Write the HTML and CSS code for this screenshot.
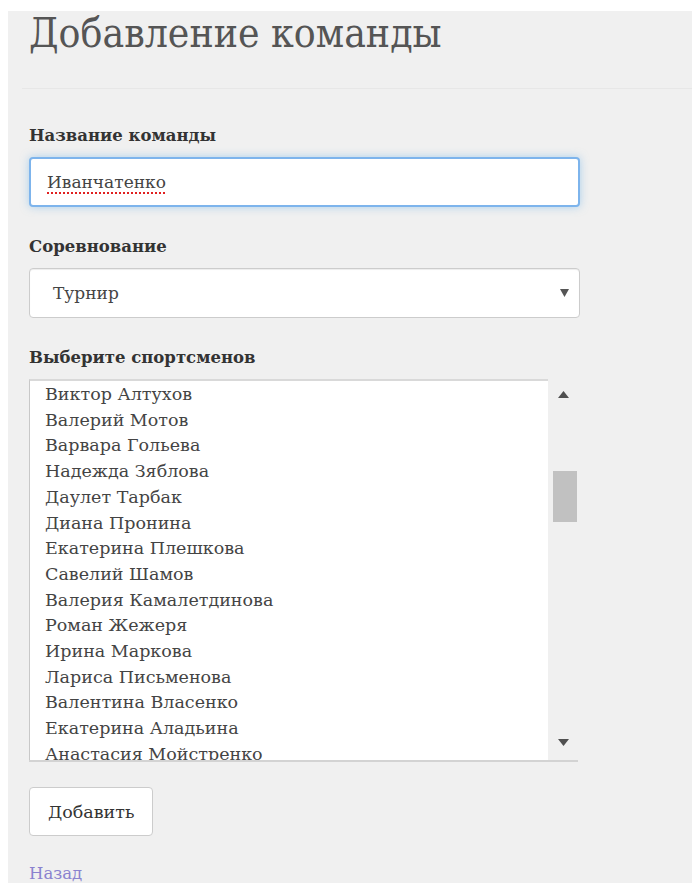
FILE: index.html
```html
<!DOCTYPE html>
<html lang="ru">
<head>
<meta charset="utf-8">
<title>Добавление команды</title>
<link rel="stylesheet" href="styles.css">
</head>
<body>
<div class="page">
  <h1 class="title">Добавление команды</h1>
  <hr class="rule">
  <form class="form">
    <div class="field">
      <label class="label">Название команды</label>
      <div class="control control-focus"><span class="spell">Иванчатенко</span></div>
    </div>
    <div class="field">
      <label class="label">Соревнование</label>
      <div class="control select">
        <span>Турнир</span>
        <svg class="caret" width="9" height="8" viewBox="0 0 9 8"><path d="M0 0h9L4.5 8z" fill="#555"/></svg>
      </div>
    </div>
    <div class="field">
      <label class="label">Выберите спортсменов</label>
      <div class="listbox">
        <ul class="options">
          <li>Виктор Алтухов</li>
          <li>Валерий Мотов</li>
          <li>Варвара Гольева</li>
          <li>Надежда Зяблова</li>
          <li>Даулет Тарбак</li>
          <li>Диана Пронина</li>
          <li>Екатерина Плешкова</li>
          <li>Савелий Шамов</li>
          <li>Валерия Камалетдинова</li>
          <li>Роман Жежеря</li>
          <li>Ирина Маркова</li>
          <li>Лариса Письменова</li>
          <li>Валентина Власенко</li>
          <li>Екатерина Аладьина</li>
          <li>Анастасия Мойстренко</li>
        </ul>
        <div class="scrollbar">
          <svg class="arrow" width="11" height="7" viewBox="0 0 11 7"><path d="M0 7h11L5.5 0z" fill="#505050"/></svg>
          <div class="track"><div class="thumb"></div></div>
          <svg class="arrow" width="11" height="7" viewBox="0 0 11 7"><path d="M0 0h11L5.5 7z" fill="#505050"/></svg>
        </div>
      </div>
    </div>
    <button type="button" class="btn">Добавить</button>
  </form>
  <a class="back" href="#">Назад</a>
</div>
</body>
</html>
```

FILE: styles.css
```css
html, body {
  margin: 0;
  padding: 0;
  background: #fff;
}

body {
  font-family: "DejaVu Serif", serif;
  color: #333;
}

.page {
  margin: 15px 0 0 8px;
  padding: 0 0 0 21px;
  background: #f0f0f0;
  min-height: 872px;
  box-sizing: border-box;
}

.title {
  margin: -4px 0 0;
  font-family: "DejaVu Serif Condensed", "DejaVu Serif", serif;
  font-stretch: condensed;
  font-weight: normal;
  font-size: 40.5px;
  line-height: 44px;
  color: #555;
}

.rule {
  margin: 33px 0 0 -7px;
  border: 0;
  border-top: 1px solid #e7e7e7;
}

.form {
  display: flex;
  flex-direction: column;
  align-items: flex-start;
  padding-top: 37px;
  width: 551px;
}

.field {
  display: flex;
  flex-direction: column;
  align-self: stretch;
  margin-bottom: 30px;
}

.label {
  font-weight: bold;
  font-size: 16.5px;
  line-height: 20px;
  margin-bottom: 11px;
  color: #333;
}

.control {
  height: 50px;
  box-sizing: border-box;
  background: #fff;
  border: 1px solid #ccc;
  border-radius: 4px;
  box-shadow: inset 0 1px 1px rgba(0,0,0,.075);
  display: flex;
  align-items: center;
  padding: 0 13px;
  font-size: 17px;
  color: #444;
}

.control-focus {
  border: 2px solid #7db4ec;
  box-shadow: 0 0 8px rgba(102,175,233,.5);
  padding: 0 16px;
}

.spell {
  text-decoration: underline dotted #e02020;
  text-underline-offset: 4px;
  text-decoration-thickness: 2px;
}

.select {
  justify-content: space-between;
  padding: 0 10px 0 23px;
}

.caret {
  display: block;
}

.listbox {
  display: flex;
  height: 383px;
  box-sizing: border-box;
  border-bottom: 2px solid #d3d3d3;
  margin-right: 2px;
}

.options {
  flex: 1;
  margin: 0;
  padding: 1px 0 0 15px;
  list-style: none;
  background: #fff;
  border-top: 2px solid #d9d9d9;
  border-left: 1px solid #c8c8c8;
  overflow: hidden;
  font-size: 17.5px;
  line-height: 25.7px;
  color: #444;
}

.options li {
  white-space: nowrap;
}

.scrollbar {
  width: 30px;
  display: flex;
  flex-direction: column;
  align-items: center;
  padding: 12px 0 14px;
  box-sizing: border-box;
  background: #f0f0f0;
}

.arrow {
  display: block;
  flex: none;
}

.track {
  flex: 1;
  align-self: stretch;
  padding: 0 1px 0 5px;
}

.thumb {
  margin-top: 73px;
  height: 51px;
  background: #c1c1c1;
}

.btn {
  margin-top: -5px;
  height: 49px;
  padding: 0 18px;
  background: #fff;
  border: 1px solid #ccc;
  border-radius: 4px;
  font-family: inherit;
  font-size: 17.5px;
  color: #333;
}

.back {
  display: inline-block;
  margin-top: 28px;
  font-size: 16.5px;
  color: #8a82cf;
  text-decoration: none;
}
```
